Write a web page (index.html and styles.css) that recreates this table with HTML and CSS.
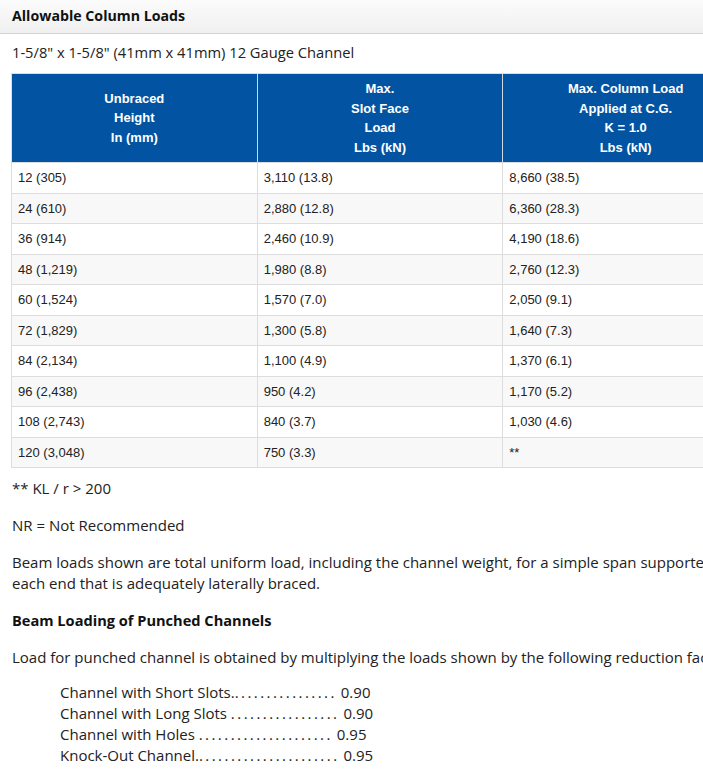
FILE: index.html
```html
<!DOCTYPE html>
<html>
<head>
<meta charset="utf-8">
<link rel="stylesheet" href="styles.css">
</head>
<body>
<div class="page">
  <div class="panel-head">Allowable Column Loads</div>
  <div class="content">
    <p class="subtitle">1-5/8" x 1-5/8" (41mm x 41mm) 12 Gauge Channel</p>
    <table class="loads">
      <thead>
        <tr>
          <th>Unbraced<br>Height<br>In (mm)</th>
          <th>Max.<br>Slot Face<br>Load<br>Lbs (kN)</th>
          <th>Max. Column Load<br>Applied at C.G.<br>K = 1.0<br>Lbs (kN)</th>
        </tr>
      </thead>
      <tbody>
        <tr><td>12 (305)</td><td>3,110 (13.8)</td><td>8,660 (38.5)</td></tr>
        <tr><td>24 (610)</td><td>2,880 (12.8)</td><td>6,360 (28.3)</td></tr>
        <tr><td>36 (914)</td><td>2,460 (10.9)</td><td>4,190 (18.6)</td></tr>
        <tr><td>48 (1,219)</td><td>1,980 (8.8)</td><td>2,760 (12.3)</td></tr>
        <tr><td>60 (1,524)</td><td>1,570 (7.0)</td><td>2,050 (9.1)</td></tr>
        <tr><td>72 (1,829)</td><td>1,300 (5.8)</td><td>1,640 (7.3)</td></tr>
        <tr><td>84 (2,134)</td><td>1,100 (4.9)</td><td>1,370 (6.1)</td></tr>
        <tr><td>96 (2,438)</td><td>950 (4.2)</td><td>1,170 (5.2)</td></tr>
        <tr><td>108 (2,743)</td><td>840 (3.7)</td><td>1,030 (4.6)</td></tr>
        <tr><td>120 (3,048)</td><td>750 (3.3)</td><td>**</td></tr>
      </tbody>
    </table>
    <p class="note first">** KL / r &gt; 200</p>
    <p class="note">NR = Not Recommended</p>
    <p class="note">Beam loads shown are total uniform load, including the channel weight, for a simple span supported at<br>each end that is adequately laterally braced.</p>
    <p class="note heading">Beam Loading of Punched Channels</p>
    <p class="note">Load for punched channel is obtained by multiplying the loads shown by the following reduction factors:</p>
    <ul class="factors">
      <li>Channel with Short Slots.<span class="dots">................</span> 0.90</li>
      <li>Channel with Long Slots <span class="dots">.................</span> 0.90</li>
      <li>Channel with Holes <span class="dots">.....................</span> 0.95</li>
      <li>Knock-Out Channel.<span class="dots">......................</span> 0.95</li>
    </ul>
  </div>
</div>
</body>
</html>
```

FILE: styles.css
```css
html, body {
  margin: 0;
  padding: 0;
  background: #ffffff;
  overflow: hidden;
}

.page {
  width: 800px;
  font-family: "Open Sans", "DejaVu Sans", sans-serif;
  font-size: 15px;
  color: #222222;
}

.panel-head {
  height: 33px;
  line-height: 31px;
  padding: 0 12px;
  font-weight: 700;
  font-size: 14.2px;
  color: #111111;
  background: linear-gradient(#fbfbfb, #f0f0f0);
  border-bottom: 1px solid #d3d3d3;
}

.content {
  padding: 0 12px 0 12px;
}

.subtitle {
  margin: 8px 0 10px 0;
  font-size: 14.7px;
  line-height: 21px;
}

.loads {
  width: 738px;
  margin-left: -1px;
  border-collapse: collapse;
  table-layout: fixed;
  font-family: "Liberation Sans", Arial, sans-serif;
  font-size: 13px;
  border: 1px solid #dddddd;
}

.loads th {
  background: #0254a2;
  color: #ffffff;
  font-weight: 700;
  line-height: 19.5px;
  padding: 5px 6px;
  text-align: center;
  border-left: 1px solid #cfd8e3;
}

.loads th:first-child {
  border-left: 1px solid #dddddd;
}

.loads td {
  height: 30.5px;
  box-sizing: border-box;
  padding: 0 6px;
  line-height: 17px;
  color: #222222;
  border: 1px solid #dddddd;
}

.loads tbody tr:nth-child(even) td {
  background: #f8f8f8;
}

.note {
  margin: 16px 0 0 0;
  line-height: 21px;
}

.note.first {
  margin-top: 10px;
}

.note.heading {
  font-weight: 700;
  font-size: 14.6px;
  color: #111111;
}

.factors {
  list-style: none;
  margin: 14px 0 0 0;
  padding: 0 0 0 48px;
  line-height: 21px;
}

.dots {
  letter-spacing: 2.45px;
}
```
